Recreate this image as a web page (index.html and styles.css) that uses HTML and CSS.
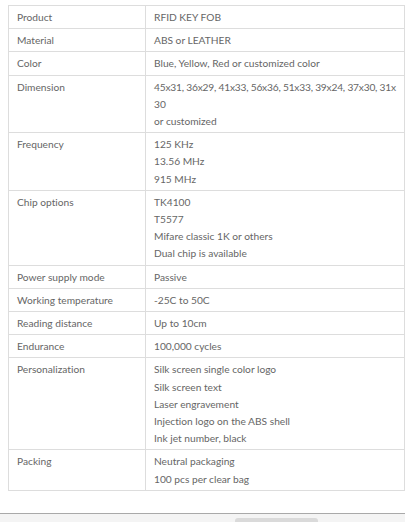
FILE: index.html
```html
<!DOCTYPE html>
<html lang="en">
<head>
<meta charset="utf-8">
<title>RFID Key Fob Specifications</title>
<link rel="stylesheet" href="styles.css">
</head>
<body>
<div class="page">
  <table class="spec">
    <colgroup><col class="ck"><col class="cv"></colgroup>
    <tbody>
      <tr><td>Product</td><td>RFID KEY FOB</td></tr>
      <tr><td>Material</td><td>ABS or LEATHER</td></tr>
      <tr><td>Color</td><td>Blue, Yellow, Red or customized color</td></tr>
      <tr><td>Dimension</td><td><span class="tight">45x31, 36x29, 41x33, 56x36, 51x33, 39x24, 37x30, 31x</span><br>30<br>or customized</td></tr>
      <tr><td>Frequency</td><td>125 KHz<br>13.56 MHz<br>915 MHz</td></tr>
      <tr><td>Chip options</td><td>TK4100<br>T5577<br>Mifare classic 1K or others<br>Dual chip is available</td></tr>
      <tr><td>Power supply mode</td><td>Passive</td></tr>
      <tr><td>Working temperature</td><td>-25C to 50C</td></tr>
      <tr><td>Reading distance</td><td>Up to 10cm</td></tr>
      <tr><td>Endurance</td><td>100,000 cycles</td></tr>
      <tr><td>Personalization</td><td>Silk screen single color logo<br>Silk screen text<br>Laser engravement<br>Injection logo on the ABS shell<br>Ink jet number, black</td></tr>
      <tr><td>Packing</td><td>Neutral packaging<br>100 pcs per clear bag</td></tr>
    </tbody>
  </table>
</div>
<div class="hscroll"><div class="thumb"></div></div>
</body>
</html>
```
FILE: styles.css
```css
html, body {
  margin: 0;
  padding: 0;
  overflow: hidden;
  background: #fff;
}
body {
  font-family: Lato, "Noto Sans", sans-serif;
  color: #666;
  width: 405px;
  height: 522px;
  display: flex;
  flex-direction: column;
}
.page {
  padding: 5px 0 0 8px;
  flex: 1;
}
.spec {
  border-collapse: collapse;
  table-layout: fixed;
  width: 397px;
  font-size: 10.2px;
  line-height: 17.2px;
  font-feature-settings: "calt" 0, "liga" 0;
}
.ck {
  width: 137px;
}
.spec td {
  border: 1px solid #ddd;
  padding: 3px 2px 2px 8px;
  vertical-align: top;
  white-space: nowrap;
}
.tight {
  letter-spacing: -0.2px;
}
.hscroll {
  height: 8px;
  border-top: 1px solid #a9a9a9;
  background: #f4f4f4;
  position: relative;
}
.thumb {
  position: absolute;
  left: 235px;
  top: 4px;
  width: 83px;
  height: 10px;
  border-radius: 3px;
  background: #dadada;
}
```
